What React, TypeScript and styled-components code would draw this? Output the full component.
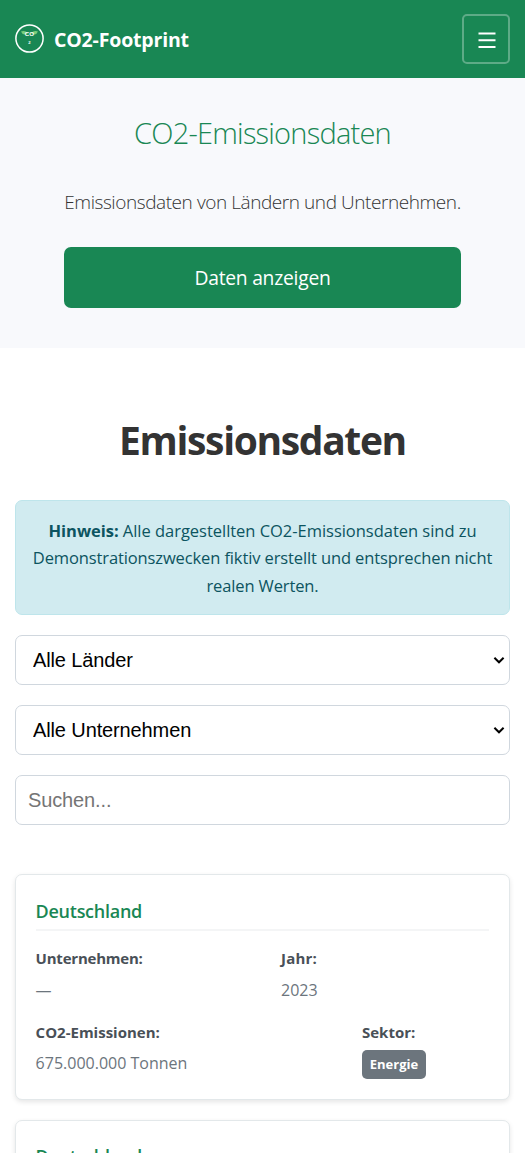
import React from 'react';
import styled, { createGlobalStyle } from 'styled-components';

const GlobalStyle = createGlobalStyle`
  *, *::before, *::after { box-sizing: border-box; }
  html { overflow: hidden; }
  body {
    margin: 0;
    background: #fff;
    color: #333;
    font-family: "Segoe UI", "Open Sans", "Noto Sans", sans-serif;
    font-size: 16px;
    line-height: 1.6;
  }
  h1, h2, h3, p { margin: 0; }
`;

const Page = styled.div`
  height: 1153px;
  overflow: hidden;
`;

const Header = styled.header`
  display: flex;
  align-items: center;
  justify-content: space-between;
  height: 78px;
  padding: 0 15px;
  background: #198754;
  color: #fff;
`;

const Brand = styled.div`
  display: flex;
  align-items: center;
  gap: 10px;
  white-space: nowrap;
`;

const BrandIcon = styled.svg`
  display: block;
  width: 29px;
  height: 29px;
  margin-top: -2px;
`;

const BrandName = styled.span`
  padding-top: 2px;
  font-size: 19.5px;
  font-weight: 700;
  letter-spacing: -0.17px;
`;

const MenuButton = styled.button`
  display: grid;
  place-items: center;
  width: 48px;
  height: 50px;
  padding: 0 0 0 1px;
  border: 2px solid rgba(255, 255, 255, 0.3);
  border-radius: 5px;
  background: transparent;
`;

const Hero = styled.section`
  display: flex;
  flex-direction: column;
  align-items: center;
  height: 269.5px;
  padding-top: 31px;
  background: #f8f9fc;
  white-space: nowrap;
`;

const HeroTitle = styled.h1`
  color: #198754;
  font-size: 29px;
  font-weight: 300;
  line-height: 48px;
  letter-spacing: -0.78px;
`;

const HeroLead = styled.p`
  margin-top: 29px;
  font-size: 19px;
  font-weight: 300;
  line-height: 32px;
  letter-spacing: -0.43px;
`;

const HeroButton = styled.button`
  width: 397px;
  height: 61px;
  margin-top: 28.6px;
  padding: 1px 0 0;
  border: 0;
  border-radius: 7px;
  background: #198754;
  color: #fff;
  font: 400 19.3px "Segoe UI", "Open Sans", "Noto Sans", sans-serif;
  letter-spacing: -0.25px;
`;

const Main = styled.main`
  padding: 60px 15px 0;
`;

const SectionTitle = styled.h2`
  font-size: 39px;
  font-weight: 700;
  line-height: 64px;
  text-align: center;
  letter-spacing: -1.35px;
`;

const Notice = styled.p`
  height: 115px;
  margin-top: 28.5px;
  padding: 16px 10px;
  border: 1px solid #bee5eb;
  border-radius: 7px;
  background: #d1ebf0;
  color: #0c5460;
  font-size: 16.5px;
  line-height: 27.3px;
  text-align: center;
  letter-spacing: -0.12px;
  white-space: nowrap;
`;

const NoticeLead = styled.span`
  letter-spacing: -0.03px;
`;

const Filters = styled.div`
  display: flex;
  flex-direction: column;
  gap: 20px;
  margin-top: 20px;
`;

const SelectBox = styled.div`
  position: relative;
  height: 50px;
`;

const Select = styled.select`
  appearance: none;
  display: block;
  width: 100%;
  height: 100%;
  padding: 0 30px 0 17px;
  border: 1px solid #d0d7de;
  border-radius: 7px;
  background: #fff;
  color: #000;
  font: 20px "Liberation Sans", Arial, sans-serif;
  letter-spacing: -0.12px;
`;

const SelectArrow = styled.svg`
  position: absolute;
  top: 21px;
  right: 5px;
  width: 12px;
  height: 9px;
  pointer-events: none;
`;

const Search = styled.input`
  height: 50px;
  padding: 0 12px;
  border: 1px solid #d0d7de;
  border-radius: 7px;
  background: #fff;
  font: 20px "Liberation Sans", Arial, sans-serif;
  letter-spacing: -0.12px;
  &::placeholder { color: #757575; }
`;

const CardList = styled.div`
  display: flex;
  flex-direction: column;
  gap: 20px;
  margin-top: 49.3px;
`;

const Card = styled.article`
  flex: none;
  height: 225.5px;
  padding: 20.5px 20px 19px 19.6px;
  border: 1px solid #e3e8ea;
  border-radius: 7px;
  background: #fff;
  box-shadow: 0 2px 5px rgba(0, 0, 0, 0.1);
  white-space: nowrap;
`;

const CardTitle = styled.h3`
  height: 35.5px;
  border-bottom: 2px solid #f4f5f6;
  color: #198754;
  font-size: 18px;
  font-weight: 600;
  line-height: 31px;
  letter-spacing: -0.27px;
`;

const Row = styled.div<{ $columns: string; $top: number }>`
  display: grid;
  grid-template-columns: ${(p) => p.$columns};
  margin-top: ${(p) => p.$top}px;
`;

const Label = styled.div<{ $spacing?: number }>`
  color: #495057;
  font-size: 15px;
  font-weight: 700;
  line-height: 26px;
  letter-spacing: ${(p) => p.$spacing ?? 0}px;
`;

const Value = styled.div<{ $top: number }>`
  margin-top: ${(p) => p.$top}px;
  color: #6c757d;
  font-size: 16px;
  line-height: 26px;
`;

const Badge = styled.span`
  display: block;
  width: 64px;
  height: 29px;
  margin-top: 5px;
  border-radius: 5px;
  background: #6c757d;
  color: #fff;
  font-size: 13px;
  font-weight: 700;
  line-height: 29px;
  text-align: center;
`;

function Logo() {
  return (
    <BrandIcon viewBox="0 0 29 29">
      <circle cx="14.5" cy="14.5" r="13.6" fill="none" stroke="#fff" strokeWidth="1.5" />
      <path d="M6 7.5Q10 6 13 9.2Q8 12.3 6 7.5Z" fill="#7ccf7c" />
      <path d="M23 7.5Q19 6 16 9.2Q21 12.3 23 7.5Z" fill="#7ccf7c" />
      <text x="14.5" y="12.1" textAnchor="middle" fontFamily="Liberation Sans, sans-serif" fontSize="6.2" fontWeight="700" fill="#fff">CO</text>
      <text x="14.5" y="20.3" textAnchor="middle" fontFamily="Liberation Sans, sans-serif" fontSize="4.2" fontWeight="700" fill="#fff">2</text>
    </BrandIcon>
  );
}

function FilterSelect({ label }: { label: string }) {
  return (
    <SelectBox>
      <Select><option>{label}</option></Select>
      <SelectArrow viewBox="0 0 12 9">
        <path d="M1.4 1.8L6 6.3L10.6 1.8" fill="none" stroke="#000" strokeWidth="2" />
      </SelectArrow>
    </SelectBox>
  );
}

function EmissionCard({ country }: { country: string }) {
  return (
    <Card>
      <CardTitle>{country}</CardTitle>
      <Row $columns="245.4px 1fr" $top={14}>
        <div><Label $spacing={-0.22}>Unternehmen:</Label><Value $top={6}>—</Value></div>
        <div><Label $spacing={0.2}>Jahr:</Label><Value $top={6}>2023</Value></div>
      </Row>
      <Row $columns="326.4px 1fr" $top={16}>
        <div><Label>CO2-Emissionen:</Label><Value $top={5}>675.000.000 Tonnen</Value></div>
        <div><Label>Sektor:</Label><Badge>Energie</Badge></div>
      </Row>
    </Card>
  );
}

export default function App() {
  return (
    <Page>
      <GlobalStyle />
      <Header>
        <Brand><Logo /><BrandName>CO2-Footprint</BrandName></Brand>
        <MenuButton aria-label="Menü">
          <svg width="18" height="18" viewBox="0 0 18 18">
            <path d="M0.5 3.5H17.5M0.5 10.3H17.5M0.5 17H17.5" stroke="#fff" strokeWidth="2" />
          </svg>
        </MenuButton>
      </Header>
      <Hero>
        <HeroTitle>CO2-Emissionsdaten</HeroTitle>
        <HeroLead>Emissionsdaten von Ländern und Unternehmen.</HeroLead>
        <HeroButton>Daten anzeigen</HeroButton>
      </Hero>
      <Main>
        <SectionTitle>Emissionsdaten</SectionTitle>
        <Notice>
          <NoticeLead><strong>Hinweis:</strong> Alle dargestellten CO2-Emissionsdaten sind zu</NoticeLead><br />
          Demonstrationszwecken fiktiv erstellt und entsprechen nicht<br />
          realen Werten.
        </Notice>
        <Filters>
          <FilterSelect label="Alle Länder" />
          <FilterSelect label="Alle Unternehmen" />
          <Search placeholder="Suchen..." />
        </Filters>
        <CardList>
          <EmissionCard country="Deutschland" />
          <EmissionCard country="Deutschland" />
        </CardList>
      </Main>
    </Page>
  );
}
